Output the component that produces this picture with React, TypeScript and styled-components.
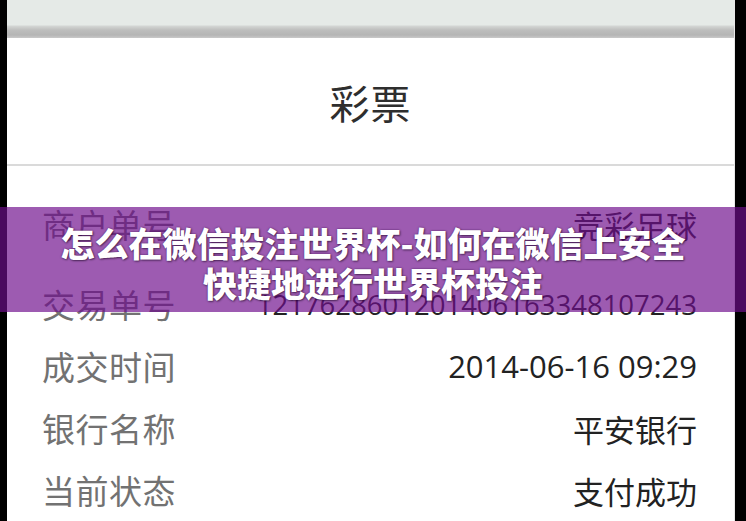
import { createGlobalStyle, styled } from 'styled-components';

type ReceiptRow = {
  label: string;
  value: string;
  small?: boolean;
  gapAfter?: boolean;
};

const rows: ReceiptRow[] = [
  { label: '商户单号', value: '竞彩足球', gapAfter: true },
  { label: '交易单号', value: '1217628601201406163348107243', small: true },
  { label: '成交时间', value: '2014-06-16 09:29' },
  { label: '银行名称', value: '平安银行' },
  { label: '当前状态', value: '支付成功' },
];

const App: React.FunctionComponent = () => {
  return (
    <Page>
      <GlobalStyle />
      <Screen>
        <StatusBar />
        <Header>
          <Title>彩票</Title>
        </Header>
        <List>
          {rows.map(row => (
            <Row key={row.label} $gapAfter={row.gapAfter}>
              <Label>{row.label}</Label>
              <Value $small={row.small}>{row.value}</Value>
            </Row>
          ))}
        </List>
      </Screen>

      <Banner>
        <BannerText>
          怎么在微信投注世界杯-如何在微信上安全
          <br />
          快捷地进行世界杯投注
        </BannerText>
      </Banner>
    </Page>
  );
};

export default App;

const GlobalStyle = createGlobalStyle`
  html, body {
    margin: 0;
    padding: 0;
    background: #000;
    overflow: hidden;
  }
`;

const Page = styled.div`
  position: relative;
  width: 746px;
  height: 521px;
  overflow: hidden;
  display: flex;
  padding: 0 11px 0 7px;
  box-sizing: border-box;
  background: #000;
  font-family: 'Noto Sans CJK SC', sans-serif;
`;

const Screen = styled.div`
  flex: 1;
  display: flex;
  flex-direction: column;
  background: #fff;
  border-right: 1px solid #e8e8e8;
`;

const StatusBar = styled.div`
  height: 38px;
  flex-shrink: 0;
  background: linear-gradient(
    to bottom,
    #e5eae7 0,
    #e5eae7 25px,
    #d3d6d4 26px,
    #bdbebd 30px,
    #b5b5b5 35px,
    #c9c9c9 38px
  );
`;

const Header = styled.div`
  height: 130px;
  display: flex;
  align-items: center;
  justify-content: center;
  border-bottom: 2px solid #dadada;
`;

const Title = styled.div`
  margin-top: 2px;
  color: #2e2e2e;
  font-size: 40px;
  letter-spacing: 1px;
`;

const List = styled.div`
  display: flex;
  flex-direction: column;
  padding: 27px 37px 0 35px;
`;

const Row = styled.div<{ $gapAfter?: boolean }>`
  height: 62px;
  flex-shrink: 0;
  display: flex;
  align-items: center;
  justify-content: space-between;
  margin-bottom: ${p => (p.$gapAfter ? '18px' : '0')};
`;

const Label = styled.div`
  color: #727272;
  font-size: 33px;
  letter-spacing: 0.5px;
`;

const Value = styled.div<{ $small?: boolean }>`
  color: #222;
  font-family: 'Open Sans', 'Noto Sans CJK SC', sans-serif;
  font-size: ${p => (p.$small ? '27.5px' : '31px')};
  letter-spacing: 0;
`;

const Banner = styled.div`
  position: absolute;
  left: 0;
  right: 0;
  top: 207px;
  height: 105px;
  box-sizing: border-box;
  padding-top: 16px;
  background: rgba(110, 14, 140, 0.68);
  display: flex;
  justify-content: center;
`;

const BannerText = styled.div`
  color: #fff;
  font-size: 34px;
  font-weight: 900;
  line-height: 40px;
  text-align: center;
  text-shadow:
    0 0 2px rgba(50, 0, 70, 0.7),
    1px 1px 2px rgba(0, 0, 0, 0.45);
`;
